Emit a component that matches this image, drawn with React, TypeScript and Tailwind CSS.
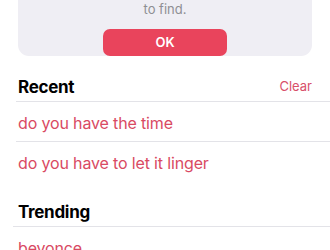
import React from "react";

const font = { fontFamily: "Inter, 'Noto Sans', 'Liberation Sans', sans-serif" };

export default function App() {
  return (
    <div className="w-[330px] h-[250px] overflow-hidden bg-white" style={font}>
      <div className="mx-[18px] w-[294px] h-[56px] bg-[#efeef4] rounded-b-[11px] flex flex-col items-center">
        <div className="mt-[1px] text-[13px] leading-[16px] text-[#8e8e93]">to find.</div>
        <button className="mt-[12px] w-[124px] h-[27px] rounded-[7px] bg-[#e9445c] text-white text-[13px] font-semibold flex items-center justify-center">
          OK
        </button>
      </div>

      <div className="mt-[20px] pl-[18px] pr-[18px] flex items-end justify-between h-[25px] pb-[4px]">
        <div className="text-[17px] font-bold leading-[20px] text-black tracking-[-0.3px]">Recent</div>
        <div className="text-[13px] leading-[16px] text-[#d8506a] mb-[3px]">Clear</div>
      </div>
      <div className="ml-[16px] h-px bg-[#e3e3e8]" />
      <div className="h-[39px] pl-[18px] flex items-center pt-[3px] text-[16px] leading-[20px] tracking-[-0.15px] text-[#d94a63]">
        do you have the time
      </div>
      <div className="ml-[16px] h-px bg-[#e3e3e8]" />
      <div className="h-[39px] pl-[18px] flex items-center pt-[3px] text-[16px] leading-[20px] tracking-[-0.15px] text-[#d94a63]">
        do you have to let it linger
      </div>

      <div className="mt-[19px] pl-[18px] h-[26px] flex items-end pb-[4px]">
        <div className="text-[17px] font-bold leading-[20px] text-black tracking-[-0.3px]">Trending</div>
      </div>
      <div className="ml-[13px] h-px bg-[#e3e3e8]" />
      <div className="h-[39px] pl-[18px] flex items-start pt-[11px] text-[16px] leading-[20px] tracking-[-0.15px] text-[#d94a63]">
        beyonce
      </div>
    </div>
  );
}
